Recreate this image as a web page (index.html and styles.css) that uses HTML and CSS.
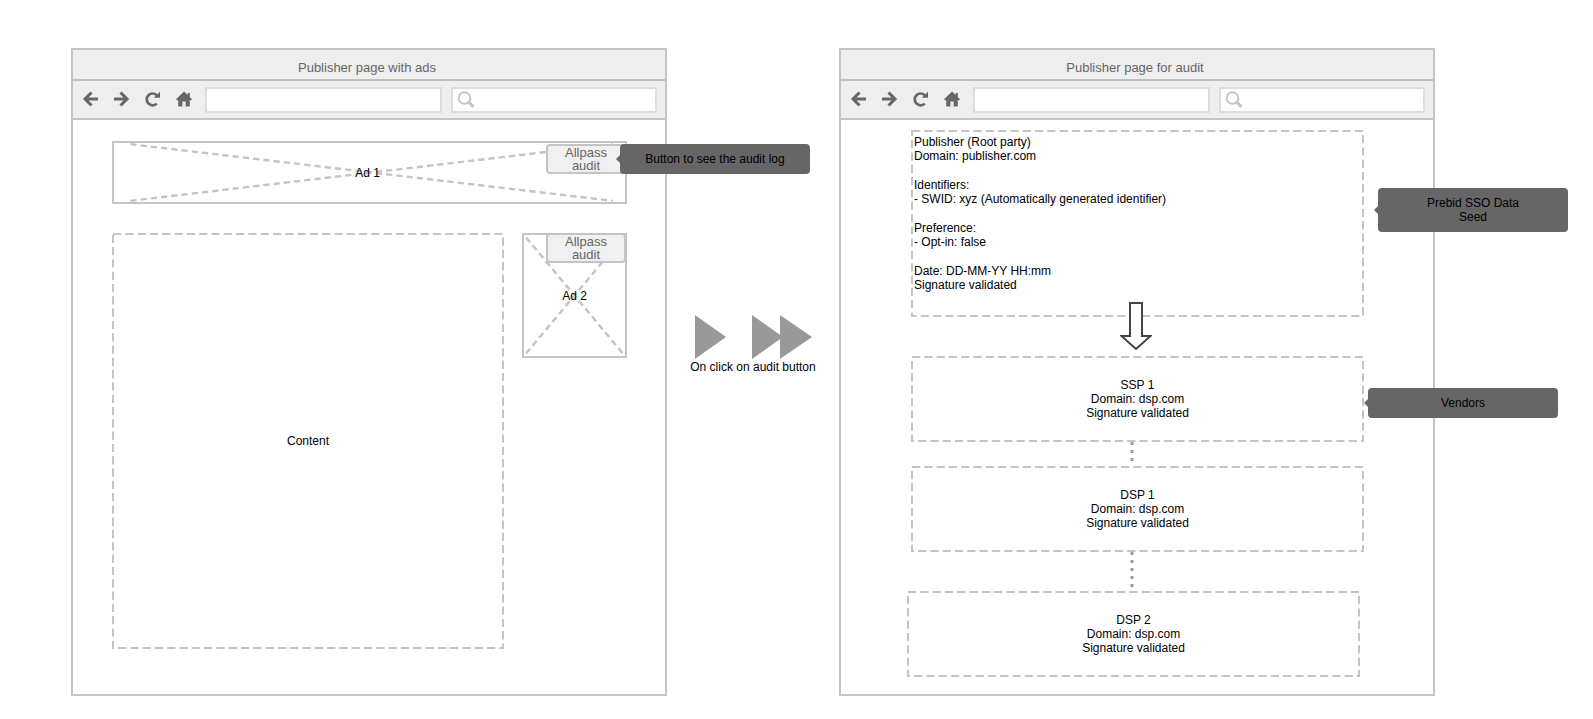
FILE: index.html
```
<!DOCTYPE html>
<html lang="en">
<head>
<meta charset="utf-8">
<title>Publisher page audit flow</title>
<link rel="stylesheet" href="styles.css">
</head>
<body>
<svg class="defs" aria-hidden="true">
  <symbol id="back" viewBox="0 0 16 16"><path d="M15 8H2M8.5 1.5L2 8l6.5 6.5" fill="none" stroke="currentColor" stroke-width="3"/></symbol>
  <symbol id="forward" viewBox="0 0 16 16"><path d="M0 8h13M6.500 1.500L13 8l-6.500 6.500" fill="none" stroke="currentColor" stroke-width="3"/></symbol>
  <symbol id="reload" viewBox="0 0 16 16"><path d="M11.800 4.200A5.900 5.900 0 1 0 11.800 12.600" fill="none" stroke="currentColor" stroke-width="2.700"/><path d="M15 .800v6H8.800z" fill="currentColor"/></symbol>
  <symbol id="home" viewBox="0 0 16 16"><path d="M8 .500L0 8.300l1 .900h1.200V15.500h4.200v-5h3.200v5h4.200V9.200H15l1-.900-2.200-2.200V2h-2.100v2.100z" fill="currentColor"/></symbol>
  <symbol id="search" viewBox="0 0 18 18"><circle cx="7.500" cy="7" r="5.800" fill="none" stroke="currentColor" stroke-width="2"/><path d="M11.500 11l5 4.800" stroke="currentColor" stroke-width="3"/></symbol>
</svg>
<main class="flow">
  <section class="window">
    <h1 class="window-title">Publisher page with ads</h1>
    <div class="toolbar">
      <div class="nav">
        <button class="nav-button" aria-label="Back"><svg><use href="#back"/></svg></button>
        <button class="nav-button" aria-label="Forward"><svg><use href="#forward"/></svg></button>
        <button class="nav-button" aria-label="Reload"><svg><use href="#reload"/></svg></button>
        <button class="nav-button" aria-label="Home"><svg><use href="#home"/></svg></button>
      </div>
      <input class="field" type="text" aria-label="Address">
      <label class="search"><svg class="search-icon"><use href="#search"/></svg><input class="field" type="text" aria-label="Search"></label>
    </div>
    <div class="page">
      <div class="ad banner">
        <svg class="cross"><line x1="3.200%" y1="2%" x2="97.600%" y2="98%"/><line x1="3.200%" y1="98%" x2="97.600%" y2="2%"/></svg>
        <span class="label">Ad 1</span>
        <button class="audit">Allpass<br>audit</button>
        <div class="tip tip-audit">Button to see the audit log</div>
      </div>
      <div class="columns">
        <div class="content"><svg class="outline"><rect width="100%" height="100%"/></svg>Content</div>
        <div class="ad square">
          <svg class="cross"><line x1="2%" y1="2%" x2="98%" y2="98%"/><line x1="2%" y1="98%" x2="98%" y2="2%"/></svg>
          <span class="label">Ad 2</span>
          <button class="audit">Allpass<br>audit</button>
        </div>
      </div>
    </div>
  </section>

  <div class="transition">
    <svg class="play" viewBox="0 0 118 44"><path d="M1 0l31 22L1 44zM58 0l31 22-31 22zM86 0l32 22-32 22z"/></svg>
    <span>On click on audit button</span>
  </div>

  <section class="window">
    <h1 class="window-title">Publisher page for audit</h1>
    <div class="toolbar">
      <div class="nav">
        <button class="nav-button" aria-label="Back"><svg><use href="#back"/></svg></button>
        <button class="nav-button" aria-label="Forward"><svg><use href="#forward"/></svg></button>
        <button class="nav-button" aria-label="Reload"><svg><use href="#reload"/></svg></button>
        <button class="nav-button" aria-label="Home"><svg><use href="#home"/></svg></button>
      </div>
      <input class="field" type="text" aria-label="Address">
      <label class="search"><svg class="search-icon"><use href="#search"/></svg><input class="field" type="text" aria-label="Search"></label>
    </div>
    <div class="page audit-page">
      <div class="party root">
        <svg class="outline"><rect width="100%" height="100%"/></svg>
        <p>Publisher (Root party)<br>Domain: publisher.com</p>
        <p>Identifiers:<br>- SWID: xyz (Automatically generated identifier)</p>
        <p>Preference:<br>- Opt-in: false</p>
        <p>Date: DD-MM-YY HH:mm<br>Signature validated</p>
        <div class="tip tip-seed">Prebid SSO Data<br>Seed</div>
      </div>
      <div class="link link-long"><svg class="block-arrow" viewBox="0 0 32 49"><path d="M10 1h12v33h8.500L16 47 1.500 34H10z"/></svg></div>
      <div class="party">
        <svg class="outline"><rect width="100%" height="100%"/></svg>
        <p>SSP 1<br>Domain: dsp.com<br>Signature validated</p>
        <div class="tip tip-vendors">Vendors</div>
      </div>
      <div class="link"><svg class="dots"><line x1="1" y1="0" x2="1" y2="100%"/></svg></div>
      <div class="party">
        <svg class="outline"><rect width="100%" height="100%"/></svg>
        <p>DSP 1<br>Domain: dsp.com<br>Signature validated</p>
      </div>
      <div class="link link-long"><svg class="dots"><line x1="1" y1="0" x2="1" y2="100%"/></svg></div>
      <div class="party last">
        <svg class="outline"><rect width="100%" height="100%"/></svg>
        <p>DSP 2<br>Domain: dsp.com<br>Signature validated</p>
      </div>
    </div>
  </section>
</main>
</body>
</html>
```
FILE: styles.css
```
* { box-sizing: border-box; }

body {
  margin: 0;
  background: #fff;
  color: #000;
  font: 12px/14px "Liberation Sans", Arial, sans-serif;
}

p { margin: 0; }

button, input { font: inherit; }

.defs { position: absolute; width: 0; height: 0; }

.flow {
  display: flex;
  align-items: stretch;
  padding: 48px 158px 23px 71px;
}

.window {
  flex: 1 1 0;
  min-width: 0;
  display: flex;
  flex-direction: column;
  border: 2px solid #c4c4c4;
}

.window-title {
  margin: 0;
  padding: 10px 4px 3px 0;
  border-bottom: 2px solid #c0c0c0;
  background: #eee;
  color: #666;
  font-size: 13px;
  font-weight: normal;
  line-height: 16px;
  text-align: center;
}

.toolbar {
  display: grid;
  grid-template-columns: auto 237fr 206fr;
  align-items: center;
  gap: 9px;
  padding: 6px 8px 5px 10px;
  border-bottom: 2px solid #c4c4c4;
  background: #eee;
}

.nav { display: flex; gap: 15px; padding: 0 4px 2px 0; }

.nav-button {
  width: 16px;
  height: 16px;
  padding: 0;
  border: 0;
  background: none;
  color: #666;
}

.nav-button svg { display: block; width: 16px; height: 16px; }

.field {
  width: 100%;
  min-width: 0;
  height: 26px;
  padding: 0 8px;
  border: 2px solid #ddd;
  background: #fff;
}

.search { position: relative; display: flex; min-width: 0; }
.search .field { padding-left: 28px; }

.search-icon {
  position: absolute;
  left: 6px;
  top: 4px;
  width: 18px;
  height: 18px;
  color: #c4c4c4;
}

.page {
  flex: 1;
  display: flex;
  flex-direction: column;
  gap: 29px;
  padding: 21px 38px 45px 39px;
}

.columns { flex: 1; display: flex; align-items: flex-start; gap: 18px; }

.ad {
  position: relative;
  border: 2px solid #c4c4c4;
  text-align: center;
}

.banner { padding: 23px 4px 22px 0; }
.square { width: 105px; padding: 54px 0 53px; }
.label { position: relative; }

.cross {
  position: absolute;
  inset: 0;
  width: 100%;
  height: 100%;
  stroke: #c4c4c4;
  stroke-width: 2.4;
  stroke-dasharray: 6.2 4.1;
}

.content {
  position: relative;
  flex: 1;
  align-self: stretch;
  display: flex;
  align-items: center;
  justify-content: center;
}

.outline {
  position: absolute;
  inset: 1px;
  width: calc(100% - 2px);
  height: calc(100% - 2px);
  overflow: visible;
  fill: none;
  stroke: #c4c4c4;
  stroke-width: 2;
  stroke-dasharray: 8.2 4.1;
}

.audit {
  position: absolute;
  right: -1px;
  top: -2px;
  width: 80px;
  height: 30px;
  padding: 0;
  border: 2px solid #c4c4c4;
  border-radius: 4px;
  background: #f0f0f0;
  color: #666;
  font-size: 13px;
  line-height: 13px;
}

.banner .audit { top: 1px; }

.tip {
  position: absolute;
  z-index: 1;
  width: 190px;
  padding: 8px;
  border-radius: 4px;
  background: #666;
  text-align: center;
}

.tip::before {
  content: "";
  position: absolute;
  right: 100%;
  top: 50%;
  margin-top: -4px;
  border: 4px solid transparent;
  border-left-width: 0;
  border-right-color: #666;
}

.tip-audit { left: calc(100% - 5px); top: 1px; }
.tip-seed { left: calc(100% + 14px); top: 58px; }
.tip-vendors { left: calc(100% + 4px); top: 32px; }

.transition {
  width: 172px;
  display: flex;
  flex-direction: column;
  align-items: center;
  gap: 1px;
  padding-top: 267px;
}

.play { width: 118px; height: 44px; fill: #999; }

.audit-page { gap: 0; padding: 10px 69px 17px 70px; }

.party { position: relative; padding: 22px 0; text-align: center; }

.root {
  display: flex;
  flex-direction: column;
  gap: 15px;
  padding: 5px 3px 25px;
  text-align: left;
}

.last { left: -4px; }

.link {
  position: relative;
  display: flex;
  justify-content: center;
  height: 24px;
  padding-right: 11px;
}

.link-long { height: 39px; }

.dots {
  width: 2px;
  height: 100%;
  overflow: visible;
  stroke: #999;
  stroke-width: 3;
  stroke-dasharray: 3 5;
}

.block-arrow {
  position: absolute;
  left: 50%;
  bottom: 5px;
  width: 32px;
  height: 49px;
  margin-left: -18px;
  fill: #fff;
  stroke: #444;
  stroke-width: 2;
}
```
